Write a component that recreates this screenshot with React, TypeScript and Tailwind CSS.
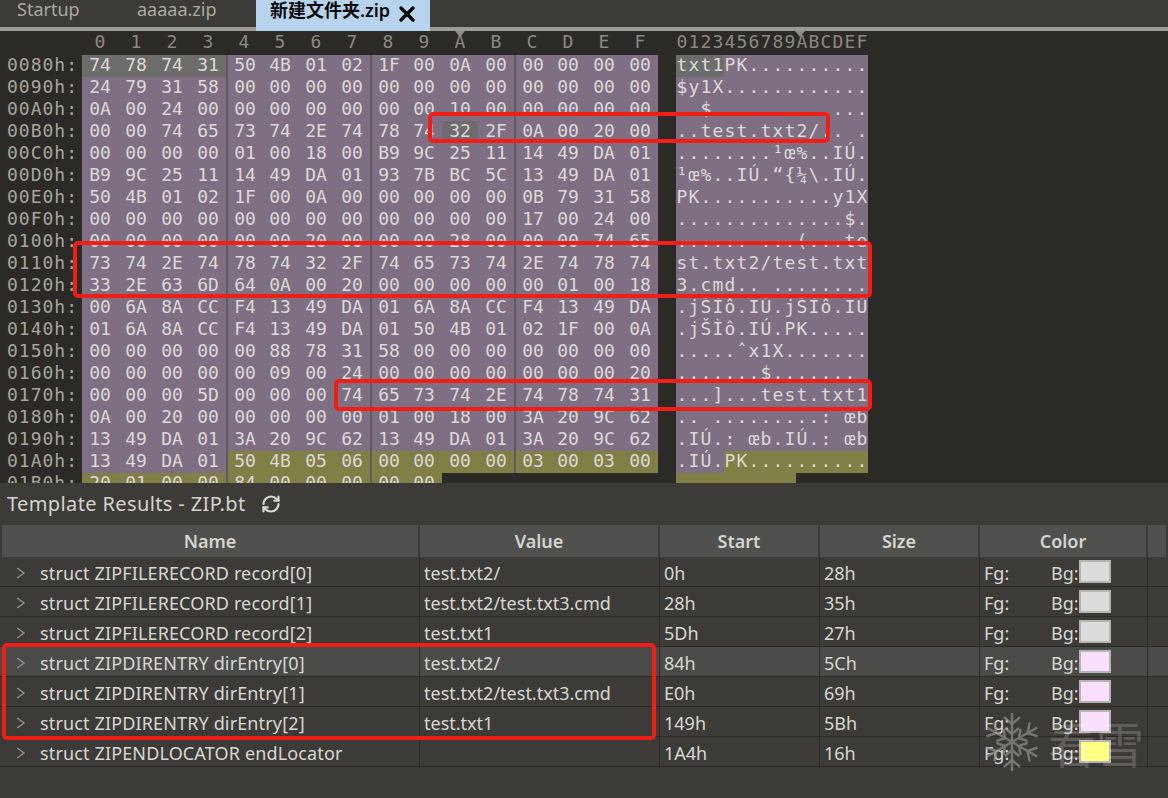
import { RefreshCw, X } from "lucide-react";

const rows: [string, string, string][] = [
  ["0080h:", "74 78 74 31 50 4B 01 02 1F 00 0A 00 00 00 00 00", "txt1PK.........."],
  ["0090h:", "24 79 31 58 00 00 00 00 00 00 00 00 00 00 00 00", "$y1X............"],
  ["00A0h:", "0A 00 24 00 00 00 00 00 00 00 10 00 00 00 00 00", "..$............."],
  ["00B0h:", "00 00 74 65 73 74 2E 74 78 74 32 2F 0A 00 20 00", "..test.txt2/.. ."],
  ["00C0h:", "00 00 00 00 01 00 18 00 B9 9C 25 11 14 49 DA 01", "........¹œ%..IÚ."],
  ["00D0h:", "B9 9C 25 11 14 49 DA 01 93 7B BC 5C 13 49 DA 01", "¹œ%..IÚ.“{¼\\.IÚ."],
  ["00E0h:", "50 4B 01 02 1F 00 0A 00 00 00 00 00 0B 79 31 58", "PK...........y1X"],
  ["00F0h:", "00 00 00 00 00 00 00 00 00 00 00 00 17 00 24 00", "..............$."],
  ["0100h:", "00 00 00 00 00 00 20 00 00 00 28 00 00 00 74 65", "...... ...(...te"],
  ["0110h:", "73 74 2E 74 78 74 32 2F 74 65 73 74 2E 74 78 74", "st.txt2/test.txt"],
  ["0120h:", "33 2E 63 6D 64 0A 00 20 00 00 00 00 00 01 00 18", "3.cmd.. ........"],
  ["0130h:", "00 6A 8A CC F4 13 49 DA 01 6A 8A CC F4 13 49 DA", ".jŠÌô.IÚ.jŠÌô.IÚ"],
  ["0140h:", "01 6A 8A CC F4 13 49 DA 01 50 4B 01 02 1F 00 0A", ".jŠÌô.IÚ.PK....."],
  ["0150h:", "00 00 00 00 00 88 78 31 58 00 00 00 00 00 00 00", ".....ˆx1X......."],
  ["0160h:", "00 00 00 00 00 09 00 24 00 00 00 00 00 00 00 20", ".......$....... "],
  ["0170h:", "00 00 00 5D 00 00 00 74 65 73 74 2E 74 78 74 31", "...]...test.txt1"],
  ["0180h:", "0A 00 20 00 00 00 00 00 01 00 18 00 3A 20 9C 62", ".. .........: œb"],
  ["0190h:", "13 49 DA 01 3A 20 9C 62 13 49 DA 01 3A 20 9C 62", ".IÚ.: œb.IÚ.: œb"],
  ["01A0h:", "13 49 DA 01 50 4B 05 06 00 00 00 00 03 00 03 00", ".IÚ.PK.........."],
  ["01B0h:", "20 01 00 00 84 00 00 00 00 00", " ........."],
];

const headers = "0123456789ABCDEF".split("");

function cellBg(r: number, i: number) {
  if (r === 0 && i < 4) return "bg-[#6c6d6a]";
  if (r === 3 && i === 10) return "bg-[#6f6a70]";
  if ((r === 18 && i >= 4) || r === 19) return "bg-[#7f7f46]";
  return "bg-[#7e7082]";
}

type Rec = { name: string; value: string; start: string; size: string; bg: string; sel?: boolean };
const records: Rec[] = [
  { name: "struct ZIPFILERECORD record[0]", value: "test.txt2/", start: "0h", size: "28h", bg: "bg-[#dcdcdc]" },
  { name: "struct ZIPFILERECORD record[1]", value: "test.txt2/test.txt3.cmd", start: "28h", size: "35h", bg: "bg-[#dcdcdc]" },
  { name: "struct ZIPFILERECORD record[2]", value: "test.txt1", start: "5Dh", size: "27h", bg: "bg-[#dcdcdc]" },
  { name: "struct ZIPDIRENTRY dirEntry[0]", value: "test.txt2/", start: "84h", size: "5Ch", bg: "bg-[#fbdfff]", sel: true },
  { name: "struct ZIPDIRENTRY dirEntry[1]", value: "test.txt2/test.txt3.cmd", start: "E0h", size: "69h", bg: "bg-[#fbdfff]" },
  { name: "struct ZIPDIRENTRY dirEntry[2]", value: "test.txt1", start: "149h", size: "5Bh", bg: "bg-[#fbdfff]" },
  { name: "struct ZIPENDLOCATOR endLocator", value: "", start: "1A4h", size: "16h", bg: "bg-[#ffff80]" },
];

const mono = "font-['DejaVu_Sans_Mono',monospace]";
const sans = "font-['Noto_Sans','Noto_Sans_CJK_SC',sans-serif]";
const redBox = "absolute border-[4px] border-[#f01e16] rounded-[5px] pointer-events-none";

function Snowflake() {
  const arm = (
    <>
      <path d="M32 32V3" />
      <path d="M32 14l-8-7M32 14l8-7" />
      <path d="M32 24l-7-6M32 24l7-6" />
    </>
  );
  return (
    <svg width="64" height="66" viewBox="0 0 64 64" fill="none" stroke="#8f8f8c" strokeWidth="2.4" className="block">
      {[0, 60, 120, 180, 240, 300].map((a) => (
        <g key={a} transform={`rotate(${a} 32 32)`}>{arm}</g>
      ))}
    </svg>
  );
}

export default function App() {
  return (
    <div className={`relative w-[1168px] h-[798px] overflow-hidden bg-[#3c3b37] ${sans}`}>
      {/* tabs */}
      <div className="relative z-10 flex items-start h-[27px] bg-[#3c3b37] text-[18px] leading-[18px] text-[#a9a9a2]">
        <span className="ml-[17px] w-[120px]">Startup</span>
        <span className="w-[119px]">aaaaa.zip</span>
        <div className="flex h-[31px] w-[174px] shrink-0 items-start bg-[#b8d3ee] pl-[14px] pt-[1px] font-semibold text-[#0a0a0a]">
          <span>新建文件夹.zip</span>
          <X size={24} strokeWidth={3.4} className="ml-[5px] mt-[1px] text-black" />
        </div>
      </div>
      <div className="h-[4px] bg-[#9c9c96]" />

      {/* hex view */}
      <div className={`relative h-[452px] overflow-hidden bg-[#2b2a26] ${mono} text-[18px] leading-[20px]`}>
        <div className="absolute left-[455px] top-0 h-0 w-0 border-x-[5px] border-t-[6px] border-x-transparent border-t-[#8c8c86]" />
        <div className="absolute left-[795px] top-0 h-0 w-0 border-x-[5px] border-t-[6px] border-x-transparent border-t-[#8c8c86]" />
        <div className="flex h-[24px] leading-[22px] text-[#8a8a84]">
          <div className="w-[82px]" />
          {headers.map((h) => (
            <div key={h} className="w-9 text-center">{h}</div>
          ))}
          <div className="w-[18px]" />
          {headers.map((h) => (
            <div key={h} className="w-3 text-center">{h}</div>
          ))}
        </div>
        {rows.map(([label, hex, ascii], r) => {
          const bytes = hex.split(" ");
          return (
            <div key={label} className="flex h-[22px] text-[#dcd9d8]">
              <div className="w-[82px] pl-[7px] tracking-[1px] text-[#a8a69e]">{label}</div>
              <div className="flex w-[576px]">
                {bytes.map((b, i) => (
                  <div
                    key={i}
                    className={`h-[22px] w-9 text-center ${cellBg(r, i)} ${i % 4 === 0 && i > 0 ? "border-l-2 border-[#5f5a60]" : ""}`}
                  >
                    {b}
                  </div>
                ))}
              </div>
              <div className="w-[18px]" />
              <div className="flex w-[192px]">
                {Array.from(ascii).map((c, i) => (
                  <span key={i} className={`h-[22px] w-3 text-center whitespace-pre ${cellBg(r === 3 ? -1 : r, i)}`}>
                    {c}
                  </span>
                ))}
              </div>
            </div>
          );
        })}
      </div>

      {/* template results */}
      <div className="flex h-[42px] items-center pl-[7px] text-[20px] tracking-[0.38px] text-[#d4d4cf]">
        <span>Template Results - ZIP.bt</span>
        <RefreshCw size={20} strokeWidth={2.6} className="ml-[15px] text-[#d8d8d4]" />
      </div>
      <div className="grid grid-cols-[420px_240px_160px_160px_168px_1fr] text-[18px] leading-[30px] text-[#d8d8d3]">
        {["Name", "Value", "Start", "Size", "Color", ""].map((h, i) => (
          <div
            key={i}
            className={`h-[32px] bg-[#50504e] text-center font-semibold leading-[32px] text-[#d4d4d0] border-r-2 border-[#3c3b37] last:border-r-0 ${i === 0 ? "ml-[2px]" : ""}`}
          >
            {h}
          </div>
        ))}
        {records.map((r) => {
          const cell = `h-[30px] border-b border-r border-[#2b2a27] ${r.sel ? "bg-[#4a4a48]" : ""}`;
          return (
            <div key={r.name} className="contents">
              <div className={`${cell} flex items-center whitespace-nowrap pt-[2px] tracking-[0.14px]`}>
                <svg width="9" height="12" viewBox="0 0 9 12" fill="none" stroke="#8f8f8b" strokeWidth="1.4" className="ml-[16px] mr-[15px] shrink-0">
                  <path d="M1 1l7 5-7 5" />
                </svg>
                <span>{r.name}</span>
              </div>
              <div className={`${cell} pl-[4px] pt-px`}>{r.value}</div>
              <div className={`${cell} pl-[4px] pt-px`}>{r.start}</div>
              <div className={`${cell} pl-[4px] pt-px`}>{r.size}</div>
              <div className={`${cell} flex items-center pl-[4px]`}>
                <span className="w-[67px] pt-[2px]">Fg:</span>
                <span className="w-[28px] pt-[2px]">Bg:</span>
                <span className={`h-[23px] w-[32px] border-2 border-[#b4b4b2] ${r.bg}`} />
              </div>
              <div className={`h-[30px] border-b border-[#2b2a27] ${r.sel ? "bg-[#4a4a48]" : ""}`} />
            </div>
          );
        })}
      </div>

      {/* red annotations */}
      <div className={`${redBox} left-[428px] top-[112px] h-[31px] w-[402px]`} />
      <div className={`${redBox} left-[73px] top-[241px] h-[57px] w-[799px]`} />
      <div className={`${redBox} left-[334px] top-[379px] h-[32px] w-[538px]`} />
      <div className={`${redBox} left-[2px] top-[643px] h-[97px] w-[654px]`} />

      {/* watermark */}
      <div className="absolute left-[980px] top-[709px] opacity-70">
        <Snowflake />
      </div>
      <div className="absolute left-[1048px] top-[714px] flex font-['Noto_Sans_CJK_SC',sans-serif] text-[48px] leading-[56px] text-white/20">
        <span>看雪</span>
      </div>
    </div>
  );
}
